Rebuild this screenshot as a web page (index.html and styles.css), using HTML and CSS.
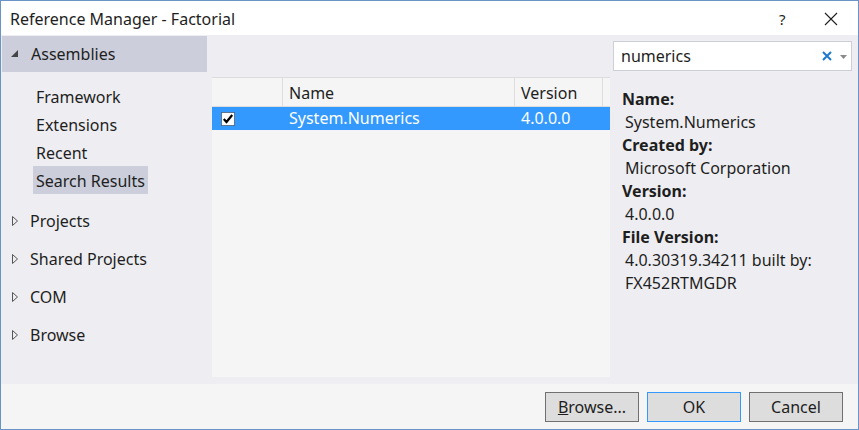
FILE: index.html
```html
<!DOCTYPE html>
<html>
<head>
<meta charset="utf-8">
<link rel="stylesheet" href="styles.css">
</head>
<body>
<div class="window">
  <div class="titlebar">
    <div class="title">Reference Manager - Factorial</div>
    <div class="help">?</div>
    <div class="close">
      <svg width="14" height="14" viewBox="0 0 14 14"><path d="M1 1 L13 13 M13 1 L1 13" stroke="#1e1e1e" stroke-width="1.1" fill="none"/></svg>
    </div>
  </div>
  <div class="main">
    <div class="sidebar">
      <div class="group-head">
        <svg class="tri-open" width="8" height="8" viewBox="0 0 8 8"><path d="M7 0 L7 7 L0 7 Z" fill="#444"/></svg>
        <span>Assemblies</span>
      </div>
      <div class="sublist">
        <div class="subitem">Framework</div>
        <div class="subitem">Extensions</div>
        <div class="subitem">Recent</div>
        <div class="subitem active">Search Results</div>
      </div>
      <div class="group first"><svg class="tri" width="6" height="10" viewBox="0 0 6 10"><path d="M0.5 0.5 L5.5 5 L0.5 9.5 Z" fill="none" stroke="#555" stroke-width="1"/></svg><span>Projects</span></div>
      <div class="group"><svg class="tri" width="6" height="10" viewBox="0 0 6 10"><path d="M0.5 0.5 L5.5 5 L0.5 9.5 Z" fill="none" stroke="#555" stroke-width="1"/></svg><span>Shared Projects</span></div>
      <div class="group"><svg class="tri" width="6" height="10" viewBox="0 0 6 10"><path d="M0.5 0.5 L5.5 5 L0.5 9.5 Z" fill="none" stroke="#555" stroke-width="1"/></svg><span>COM</span></div>
      <div class="group"><svg class="tri" width="6" height="10" viewBox="0 0 6 10"><path d="M0.5 0.5 L5.5 5 L0.5 9.5 Z" fill="none" stroke="#555" stroke-width="1"/></svg><span>Browse</span></div>
    </div>
    <div class="center">
      <div class="list">
        <div class="row header">
          <div class="cell c-check"></div>
          <div class="cell c-name">Name</div>
          <div class="cell c-ver">Version</div>
          <div class="cell c-fill"></div>
        </div>
        <div class="row selected">
          <div class="cell c-check">
            <svg class="checkbox" width="14" height="14" viewBox="0 0 14 14">
              <rect x="0.5" y="0.5" width="13" height="13" fill="#fff" stroke="#222" stroke-width="1" stroke-dasharray="1 1"/>
              <path d="M2.8 7 L5.5 10 L11.2 3" fill="none" stroke="#000" stroke-width="2.2"/>
            </svg>
          </div>
          <div class="cell c-name">System.Numerics</div>
          <div class="cell c-ver">4.0.0.0</div>
          <div class="cell c-fill"></div>
        </div>
      </div>
    </div>
    <div class="details">
      <div class="search">
        <span class="query">numerics</span>
        <svg class="clear" width="10" height="10" viewBox="0 0 10 10"><path d="M1 1 L9 9 M9 1 L1 9" stroke="#1e78d0" stroke-width="2" fill="none"/></svg>
        <svg class="drop" width="7" height="4" viewBox="0 0 7 4"><path d="M0 0 L7 0 L3.5 4 Z" fill="#8a8a8a"/></svg>
      </div>
      <div class="info">
        <div class="label">Name:</div>
        <div class="value">System.Numerics</div>
        <div class="label">Created by:</div>
        <div class="value">Microsoft Corporation</div>
        <div class="label">Version:</div>
        <div class="value">4.0.0.0</div>
        <div class="label">File Version:</div>
        <div class="value">4.0.30319.34211 built by:</div>
        <div class="value">FX452RTMGDR</div>
      </div>
    </div>
  </div>
  <div class="footer">
    <button class="btn"><u>B</u>rowse...</button>
    <button class="btn default">OK</button>
    <button class="btn">Cancel</button>
  </div>
</div>
</body>
</html>
```
FILE: styles.css
```css
html, body {
  margin: 0;
  padding: 0;
}
body {
  font-family: "Noto Sans", "Open Sans", sans-serif;
  font-size: 16px;
  color: #1e1e1e;
  background: #ffffff;
}
.window {
  width: 859px;
  height: 430px;
  box-sizing: border-box;
  border: 1px solid #6a93c8;
  display: flex;
  flex-direction: column;
  background: #eeeef2;
}
.titlebar {
  height: 34px;
  background: #ffffff;
  display: flex;
  align-items: center;
  flex-shrink: 0;
}
.title {
  padding-left: 9px;
  flex: 1;
  font-size: 16px;
  padding-top: 1px;
}
.help {
  width: 20px;
  font-size: 15px;
  margin-right: 25px;
  padding-top: 1px;
}
.close {
  width: 14px;
  height: 14px;
  margin-right: 20px;
  margin-top: 2px;
}
.close svg { display: block; }

.main {
  flex: 1;
  display: flex;
  min-height: 0;
}
.sidebar {
  width: 211px;
  flex-shrink: 0;
  display: flex;
  flex-direction: column;
}
.group-head {
  height: 36px;
  margin: 1px 5px 0 1px;
  background: #cccedb;
  display: flex;
  align-items: center;
  font-size: 16px;
}
.tri-open {
  margin-left: 9px;
  margin-right: 12px;
}
.sublist {
  margin-top: 10px;
  display: flex;
  flex-direction: column;
  align-items: flex-start;
  padding-left: 32px;
}
.subitem {
  height: 28px;
  line-height: 30px;
  padding: 0 3px;
  font-size: 16px;
}
.subitem.active {
  background: #cccedb;
}
.group {
  height: 28px;
  margin-top: 10px;
  display: flex;
  align-items: center;
  font-size: 16px;
}
.group.first { margin-top: 11px; }
.group span { padding-top: 3px; }
.tri {
  margin-left: 11px;
  margin-right: 12px;
  margin-top: 3px;
}

.center {
  width: 398px;
  flex-shrink: 0;
  padding-top: 42px;
  padding-bottom: 7px;
  display: flex;
  flex-direction: column;
}
.list {
  flex: 1;
  background: #f5f5f5;
}
.row {
  display: flex;
}
.row.header {
  border-top: 1px solid #dcdcdc;
  border-bottom: 1px solid #dcdcdc;
  box-sizing: border-box;
  height: 30px;
}
.header .cell {
  border-right: 1px solid #dcdcdc;
  line-height: 30px;
}
.header .c-fill { border-right: none; }
.cell {
  box-sizing: border-box;
  font-size: 16px;
  padding-left: 6px;
  white-space: nowrap;
}
.c-check { width: 71px; padding-left: 9px; }
.c-name { width: 232px; }
.c-ver { width: 88px; }
.c-fill { flex: 1; padding: 0; }
.row.selected {
  background: #3399ff;
  color: #ffffff;
  height: 23px;
  align-items: center;
}
.row.selected .cell { line-height: 23px; }
.checkbox { display: block; margin-top: 1px; }

.details {
  flex: 1;
  padding-left: 3px;
  padding-right: 6px;
}
.search {
  margin-top: 6px;
  height: 30px;
  box-sizing: border-box;
  border: 1px solid #ccced8;
  background: #ffffff;
  display: flex;
  align-items: center;
  padding-left: 7px;
}
.query {
  flex: 1;
  font-size: 16px;
}
.clear { margin-right: 8px; }
.drop { margin-right: 4px; margin-top: 1px; }
.info {
  padding-left: 9px;
  margin-top: 17px;
}
.label {
  font-weight: bold;
  font-size: 16px;
  line-height: 23px;
}
.value {
  font-size: 16px;
  line-height: 23px;
  padding-left: 3px;
}

.footer {
  height: 45px;
  flex-shrink: 0;
  background: #f5f5f5;
  display: flex;
  justify-content: flex-end;
  align-items: flex-start;
  padding-top: 8px;
  padding-right: 15px;
  box-sizing: border-box;
  gap: 8px;
}
.btn {
  width: 94px;
  height: 30px;
  background: #dddddd;
  border: 1px solid #707070;
  font-family: "Noto Sans", "Open Sans", sans-serif;
  font-size: 16px;
  color: #1e1e1e;
  padding: 0;
}
.btn.default {
  border-color: #3399ff;
}
```
